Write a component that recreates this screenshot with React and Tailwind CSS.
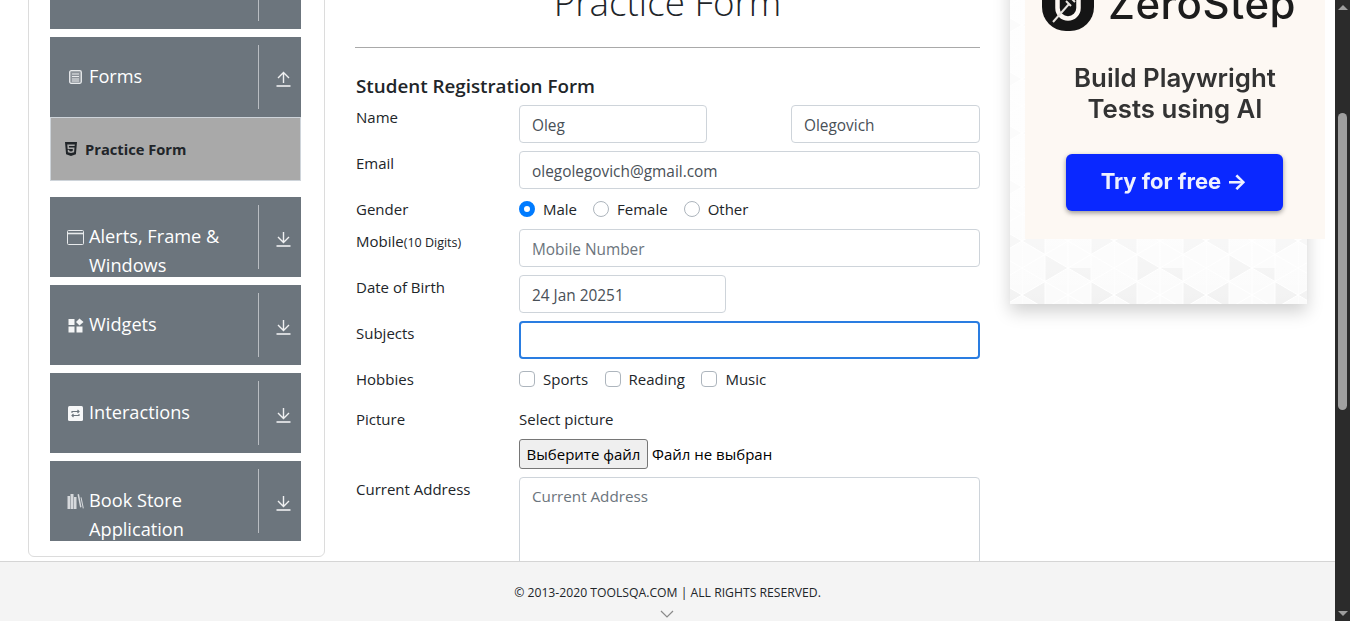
import React from 'react';
import { FaHtml5 } from 'react-icons/fa';

const FONT = "font-['Open_Sans','Noto_Sans',sans-serif]";

function ArrowIcon({ up }) {
  return (
    <svg width="15" height="16" viewBox="0 0 15 16" fill="none" stroke="#f0f1f2" strokeWidth="1.4">
      {up ? (
        <path d="M7.5 12V1.5M2 7l5.5-5.5L13 7" />
      ) : (
        <path d="M7.5 1v10.5M2 6l5.5 5.5L13 6" />
      )}
      <path d="M0.5 15h14" strokeWidth="1.6" />
    </svg>
  );
}

function FormsIcon() {
  return (
    <svg width="13" height="14" viewBox="0 0 13 14" className="ml-px mt-[8px]">
      <rect x="0.7" y="0.7" width="11.6" height="12.6" rx="1.5" fill="#8d939a" stroke="#e8eaec" strokeWidth="1.3" />
      <path d="M3 4h7M3 6.5h7M3 9h7M3 11h7" stroke="#e8eaec" strokeWidth="1" />
    </svg>
  );
}

function WindowIcon() {
  return (
    <svg width="17" height="15" viewBox="0 0 17 15" fill="none" stroke="#e8eaec" className="ml-px mt-[8px]">
      <rect x="0.5" y="0.5" width="16" height="14" rx="1" />
      <path d="M0.5 3.5h16" strokeWidth="1.6" />
    </svg>
  );
}

function WidgetIcon() {
  return (
    <svg width="16" height="15" viewBox="0 0 16 15" fill="#f4f5f6" className="mt-[8px]">
      <rect x="0.5" y="1" width="6" height="6" />
      <path d="M11.5 0.5L15.5 4l-4 3.5L8 4z" />
      <rect x="0.5" y="8.5" width="6" height="6" />
      <rect x="8.5" y="8.5" width="6" height="6" />
    </svg>
  );
}

function SwapIcon() {
  return (
    <svg width="15" height="15" viewBox="0 0 15 15" className="mt-[8px]">
      <rect width="15" height="15" rx="1.5" fill="#f6f7f8" />
      <path d="M4 7V5.5h7M9.5 4l1.5 1.5L9.5 7M11 8v1.5H4M5.5 8L4 9.5 5.5 11" fill="none" stroke="#6c757d" strokeWidth="1.1" />
    </svg>
  );
}

function BooksIcon() {
  return (
    <svg width="17" height="17" viewBox="0 0 17 17" className="ml-px mt-[6px]">
      <path d="M0.5 4h2.5v13H0.5zM3.5 2h3v15h-3zM7 5h2.5v12H7z" fill="#d6d9dc" />
      <path d="M10.5 2.5L12 2l2.5 13-1.4.5zM13.5 5.5l1-.3 2.3 11-1 .3z" fill="#d6d9dc" />
    </svg>
  );
}

function MenuGroup({ icon, label, open, wide }) {
  return (
    <div className="flex h-20 overflow-hidden bg-[#6c757d]">
      <div className={`flex min-w-0 flex-1 pt-[25px] text-[18.2px] leading-[29px] text-white ${wide ? 'pl-[16px]' : 'pl-[18px]'}`}>
        <span className={`flex shrink-0 justify-start ${wide ? 'w-[23px]' : 'w-[21px]'}`}>{icon}</span>
        <span className="w-[165px]">{label}</span>
      </div>
      <div className="my-2 flex w-[43px] items-center justify-center border-l border-[#b9bdc2] pl-[6px] pt-[4px]">
        <ArrowIcon up={open} />
      </div>
    </div>
  );
}

function Sidebar() {
  return (
    <aside className="w-[297px] shrink-0 rounded-md border border-[#dcdcdc] pb-4 pl-[21px] pr-[23px] pt-2">
      <div className="flex flex-col gap-2">
        <MenuGroup icon={null} label="Elements" />
        <div className="pb-2">
          <MenuGroup icon={<FormsIcon />} label="Forms" open />
          <div className="flex h-16 items-center gap-[6px] border border-[#ced4da] bg-[#a9a9a9] pl-[12px] text-[14.7px] font-bold text-[#212529]">
            <FaHtml5 size={16} />
            Practice Form
          </div>
        </div>
        <MenuGroup icon={<WindowIcon />} label="Alerts, Frame & Windows" wide />
        <MenuGroup icon={<WidgetIcon />} label="Widgets" />
        <MenuGroup icon={<SwapIcon />} label="Interactions" />
        <MenuGroup icon={<BooksIcon />} label="Book Store Application" wide />
      </div>
    </aside>
  );
}

function Row({ label, children, className = 'mb-2' }) {
  return (
    <div className={`flex ${className}`}>
      <div className="w-[164px] shrink-0 pl-px leading-6">{label}</div>
      <div className="min-w-0 flex-1">{children}</div>
    </div>
  );
}

function TextInput({ value, placeholder, focused, className = 'w-full' }) {
  return (
    <div
      className={`flex h-[38px] items-center rounded-[4px] pt-[3px] text-[15.4px] ${className} ${
        focused ? 'border-2 border-[#2a7de1] px-[11px]' : 'border border-[#ced4da] px-[12px]'
      } ${value ? 'text-[#495057]' : 'text-[#6c757d]'}`}
    >
      {value || placeholder}
    </div>
  );
}

function Radio({ label, checked }) {
  return (
    <div className="mr-4 flex items-center gap-2">
      <span
        className={`h-4 w-4 rounded-full ${
          checked ? 'border-[5px] border-[#007bff] bg-white' : 'border border-[#adb5bd] bg-white'
        }`}
      />
      <span>{label}</span>
    </div>
  );
}

function Checkbox({ label }) {
  return (
    <div className="mr-[16.5px] flex items-center gap-2">
      <span className="h-4 w-4 rounded-[4px] border border-[#adb5bd] bg-white" />
      <span>{label}</span>
    </div>
  );
}

function PracticeForm() {
  return (
    <main className="w-[625px] shrink-0 text-[15px] text-[#212529]">
      <h1 className="h-[107px] pt-[38px] text-center text-[36.8px] font-light leading-[48px]">Practice Form</h1>
      <hr className="border-[#a9a9a9]" />
      <h5 className="mt-[26px] h-[31px] pl-px text-[18.8px] font-semibold leading-6">Student Registration Form</h5>
      <Row label="Name">
        <div className="flex justify-between">
          <TextInput value="Oleg" className="w-[188px]" />
          <TextInput value="Olegovich" className="w-[189px]" />
        </div>
      </Row>
      <Row label="Email">
        <TextInput value="olegolegovich@gmail.com" />
      </Row>
      <Row label="Gender">
        <div className="flex h-6 items-center">
          <Radio label="Male" checked />
          <Radio label="Female" />
          <Radio label="Other" />
        </div>
      </Row>
      <Row label={<>Mobile<span className="text-[12.5px]">(10 Digits)</span></>}>
        <TextInput placeholder="Mobile Number" />
      </Row>
      <Row label="Date of Birth">
        <TextInput value="24 Jan 20251" className="w-[207px]" />
      </Row>
      <Row label="Subjects">
        <TextInput focused />
      </Row>
      <Row label="Hobbies" className="mb-4">
        <div className="flex h-6 items-center">
          <Checkbox label="Sports" />
          <Checkbox label="Reading" />
          <Checkbox label="Music" />
        </div>
      </Row>
      <Row label="Picture">
        <div className="mb-2 leading-6">Select picture</div>
        <div className="flex items-center gap-1 text-black">
          <span className="flex h-[30px] w-[129px] items-center justify-center rounded-[3px] border border-[#767676] bg-[#efefef]">
            Выберите файл
          </span>
          Файл не выбран
        </div>
      </Row>
      <Row label="Current Address">
        <div className="h-[112px] rounded-[4px] border border-[#ced4da] px-[12px] py-[6px] text-[15.2px] leading-6 text-[#6c757d]">
          Current Address
        </div>
      </Row>
    </main>
  );
}

function Ad() {
  return (
    <aside className="relative w-[297px] shrink-0">
      <div className="h-[364px] bg-[#fbfbfb] shadow-[0_8px_16px_rgba(0,0,0,0.18)]">
        <svg width="297" height="364">
          <defs>
            <pattern id="tri" width="92" height="54" patternUnits="userSpaceOnUse" x="12" y="4">
              <path d="M0 27l23-13.5v27zM92 27L69 13.5v27zM46 0L23 13.5V0zM46 54L23 40.5V54zM46 0l23 13.5V0z" fill="#f2f2f2" />
              <path d="M0 0l46 27L0 54M46 0L0 27l46 27M46 0l46 27-46 27M92 0L46 27l46 27M0 0v54M23 0v54M46 0v54M69 0v54" fill="none" stroke="#ffffff" strokeWidth="1" />
            </pattern>
            <linearGradient id="fade" x1="0" y1="0" x2="0" y2="1">
              <stop offset="0.7" stopColor="#ffffff" stopOpacity="0.7" />
              <stop offset="1" stopColor="#ffffff" stopOpacity="0" />
            </linearGradient>
          </defs>
          <rect width="297" height="364" fill="url(#tri)" />
          <rect width="297" height="364" fill="url(#fade)" />
        </svg>
      </div>
      {/* cream banner sits over the pattern and runs past its right edge */}
      <div className="absolute left-[15px] top-0 flex h-[299px] w-[300px] flex-col items-center bg-[#fdf8f3] font-['Inter',sans-serif] blur-[0.35px]">
        <div className="flex h-[91px] w-full items-end pl-[17px]">
          <svg width="52" height="52" viewBox="0 0 52 52" className="shrink-0">
            <rect x="0" y="-6" width="52" height="58" rx="24" fill="#151515" />
            <path d="M15.5 0V29a10.5 10.5 0 0 0 21 0V0" fill="none" stroke="#fdf8f3" strokeWidth="4.5" />
            <path d="M11 43L27 25M24 22l5 5M28 18l5 5" fill="none" stroke="#e8e4df" strokeWidth="2" />
          </svg>
          <span className="mb-[6px] ml-[14px] text-[42px] font-medium leading-[42px] tracking-[0.5px] text-[#1c1c1c]">ZeroStep</span>
        </div>
        <div className="mt-[31px] text-center text-[25.8px] font-semibold leading-[31px] text-[#333]">
          Build Playwright
          <br />
          Tests using AI
        </div>
        <div className="mr-[2px] mt-[30px] flex h-[57px] w-[217px] items-center justify-center rounded-[6px] bg-[#0a28ff] pb-[3px] text-[22px] font-bold text-[#eef0ff] shadow-[0_2px_5px_rgba(0,0,0,0.4)]">
          Try for free →
        </div>
      </div>
    </aside>
  );
}

function Scrollbar() {
  return (
    <div className="relative flex w-[15px] shrink-0 flex-col items-center justify-between bg-[#2b2b2b] py-[5px]">
      <span className="h-0 w-0 border-x-[5px] border-b-[5px] border-x-transparent border-b-[#9d9d9d]" />
      <span className="absolute left-[3px] top-[113px] h-[297px] w-[9px] rounded-[5px] bg-[#9f9f9f]" />
      <span className="h-0 w-0 border-x-[5px] border-t-[5px] border-x-transparent border-t-[#9d9d9d]" />
    </div>
  );
}

export default function App() {
  return (
    <div className={`flex h-[621px] w-[1350px] overflow-hidden bg-white ${FONT}`}>
      <div className="flex min-w-0 flex-1 flex-col">
        <div className="h-[561px] overflow-hidden">
          <div className="-mt-[60px] flex h-[617px] gap-[30px] pl-[28px]">
            <Sidebar />
            <PracticeForm />
            <Ad />
          </div>
        </div>
        <footer className="flex h-[60px] flex-col items-center border-t border-[#d5d5d5] bg-[#f4f4f4] pt-[22px] text-[12.2px] leading-[18px] text-[#212529]">
          © 2013-2020 TOOLSQA.COM | ALL RIGHTS RESERVED.
          <svg width="14" height="8" viewBox="0 0 14 8" fill="none" stroke="#8a8a8a" strokeWidth="1.2" className="mr-[2px] mt-[8px]">
            <path d="M1 1l6 6 6-6" />
          </svg>
        </footer>
      </div>
      <Scrollbar />
    </div>
  );
}
